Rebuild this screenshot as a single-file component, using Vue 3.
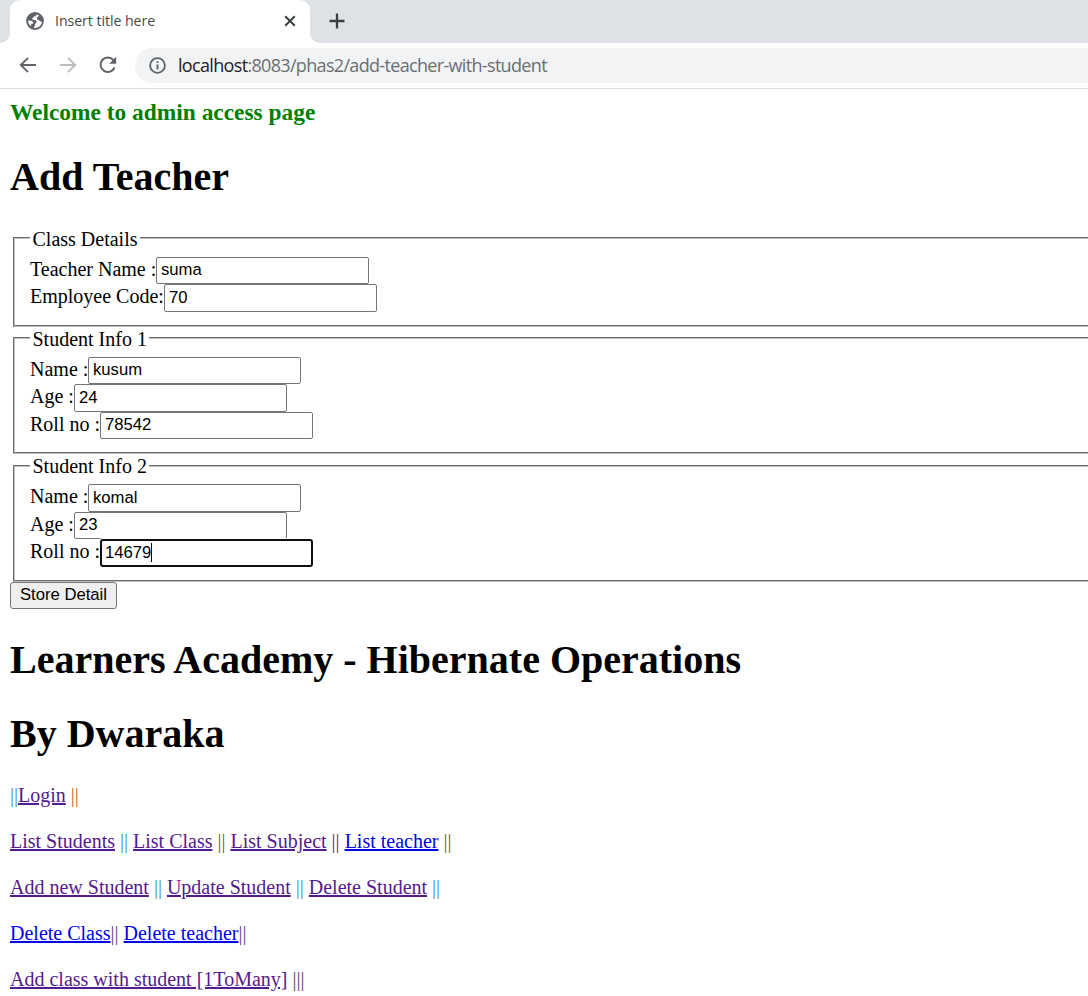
<script setup>
const groups = [
  { legend: 'Class Details', fields: [
    { label: 'Teacher Name :', value: 'suma', w: 126 },
    { label: 'Employee Code:', value: '70', w: 134 },
  ] },
  { legend: 'Student Info 1', fields: [
    { label: 'Name :', value: 'kusum', w: 58 },
    { label: 'Age :', value: '24', w: 44 },
    { label: 'Roll no :', value: '78542', w: 70 },
  ] },
  { legend: 'Student Info 2', fields: [
    { label: 'Name :', value: 'komal', w: 58 },
    { label: 'Age :', value: '23', w: 44 },
    { label: 'Roll no :', value: '14679', w: 70, focus: true },
  ] },
]
</script>

<template>
  <div class="window">
    <div class="tabs">
      <div class="prev"></div>
      <div class="tab">
        <svg class="globe" width="18" height="18" viewBox="0 0 18 18">
          <circle cx="9" cy="9" r="8.9" fill="#5f6368" />
          <path d="M10.4 2.2 C10.6 3.6 9.8 4.2 8.2 4.3 C7.6 5.6 7 5.4 6.2 6.4 C6 7.4 6.6 7.8 9.2 8 C10.6 8.4 10.8 9.4 10.6 10.6 C9.4 11.4 9 12 8.8 13.4 C8.6 14.6 8.2 15 7.6 15.7 L9 16 C12.6 16 15.6 13.4 16 9.8 C14.6 9.8 13.6 9 12.8 8 C11.4 8 10.6 7 11 5.8 C11.6 4.8 12.4 4.8 13 3.6 Z M2.1 8.6 L5 8.8 C6.6 9.2 7.4 10 7.4 11.6 L5.2 11.8 L5 14.2 C3.1 12.8 2.1 10.9 2.1 8.6 Z" fill="#fff" />
        </svg>
        <span class="tab-title">Insert title here</span>
        <svg class="close" width="12" height="12" viewBox="0 0 12 12"><path d="M1.2 1.2 L10.8 10.8 M10.8 1.2 L1.2 10.8" stroke="#3c4043" stroke-width="2" /></svg>
      </div>
      <div class="next"></div>
      <svg class="plus" width="16" height="16" viewBox="0 0 16 16"><path d="M8 .5 V15.5 M.5 8 H15.5" stroke="#3c4043" stroke-width="2.3" /></svg>
    </div>
    <div class="toolbar">
      <svg class="nav" width="18" height="18" viewBox="0 0 18 18"><path d="M17 9 H2 M9 1.8 L1.8 9 L9 16.2" fill="none" stroke="#5f6368" stroke-width="1.9" /></svg>
      <svg class="nav fwd" width="18" height="18" viewBox="0 0 18 18"><path d="M1 9 H16 M9 1.8 L16.2 9 L9 16.2" fill="none" stroke="#bbbdbf" stroke-width="1.9" /></svg>
      <svg class="nav reload" width="18" height="18" viewBox="0 0 18 18"><path d="M15.6 11.5 A7.3 7.3 0 1 1 14.4 4" fill="none" stroke="#5f6368" stroke-width="2" /><path d="M17.2 .8 V7.8 H10.2 Z" fill="#5f6368" /></svg>
      <div class="address">
        <svg width="17" height="17" viewBox="0 0 17 17"><circle cx="8.5" cy="8.5" r="7.4" fill="none" stroke="#5f6368" stroke-width="1.8" /><path d="M8.5 7.6 V12.6 M8.5 4.3 V6.1" stroke="#5f6368" stroke-width="1.9" /></svg>
        <span class="url"><span class="host">localhost</span>:8083/phas2/add-teacher-with-student</span>
      </div>
    </div>
    <main>
      <h3>Welcome to admin access page</h3>
      <h1>Add Teacher</h1>
      <form>
        <fieldset v-for="g in groups" :key="g.legend">
          <legend>{{ g.legend }}</legend>
          <div v-for="f in g.fields" :key="f.label" class="row">
            <label :style="{ width: f.w + 'px' }">{{ f.label }}</label>
            <span class="field" :class="{ focus: f.focus }"><input type="text" :value="f.value"><i v-if="f.focus" class="caret"></i></span>
          </div>
        </fieldset>
        <button type="button">Store Detail</button>
      </form>
      <h1 class="academy">Learners Academy - Hibernate Operations</h1>
      <h1 class="author">By Dwaraka</h1>
      <nav>
        <p><b class="blue">||</b><a>Login</a> <b class="brown">||</b></p>
        <p><a>List Students</a> <b class="blue">||</b> <a>List Class</a> <b class="olive">||</b> <a>List Subject</a> <b class="dark">||</b> <a class="new">List teacher</a> <b class="olive">||</b></p>
        <p><a>Add new Student</a> <b class="blue">||</b> <a>Update Student</a> <b class="blue">||</b> <a>Delete Student</a> <b class="blue">||</b></p>
        <p><a class="new">Delete Class</a><b class="purple">||</b> <a class="new">Delete teacher</a><b class="purple">||</b></p>
        <p><a>Add class with student [1ToMany]</a> <b class="purple">|||</b></p>
      </nav>
    </main>
  </div>
</template>

<style>
body { margin: 0; background: #fff; }
</style>

<style scoped>
.window { width: 1088px; height: 996px; overflow: hidden; background: #fff; color: #000; font: 20px/23px "Liberation Serif", "Times New Roman", serif; }
.tabs { display: flex; height: 43px; background: #dee1e6; }
.prev { width: 10px; background: #fff; }
.prev::before { content: ""; display: block; height: 43px; background: #dee1e6; border-bottom-right-radius: 10px; }
.tab { box-sizing: border-box; width: 300px; display: flex; align-items: center; background: #fff; border-radius: 10px 10px 0 0; padding: 0 14px 1px 16px; }
.globe { margin-right: 11px; }
.tab-title { flex: 1; font: 14.2px/20px "Open Sans", sans-serif; color: #45494d; letter-spacing: -0.07px; white-space: nowrap; }
.next { width: 10px; background: #fff; }
.next::before { content: ""; display: block; height: 43px; background: #dee1e6; border-bottom-left-radius: 10px; }
.plus { margin: 13px 0 0 9px; }
.toolbar { box-sizing: border-box; display: flex; align-items: center; height: 46px; padding: 0 0 1px 19px; border-bottom: 1px solid #d9dadc; }
.nav { flex: none; margin-right: 22px; }
.reload { margin-right: 18px; }
.address { box-sizing: border-box; flex: 1; display: flex; align-items: center; height: 35px; padding-left: 14px; border-radius: 18px 0 0 18px; background: #f1f3f4; }
.url { margin-left: 12px; font: 18px/24px "Open Sans", sans-serif; letter-spacing: -0.67px; color: #6b6f73; white-space: nowrap; }
.host { color: #202124; }
main { padding: 10px 0 0 10px; }
h3 { margin: 0; font-size: 23.4px; line-height: 27px; color: #008000; white-space: nowrap; }
h1 { margin: 28px 0 0; font-size: 40px; line-height: 46px; white-space: nowrap; }
form { margin-top: 26.8px; }
fieldset { margin: 0 -20px 0 2.5px; padding: 7px 15px 13px; border: 2px groove #c0c0c0; min-width: 0; }
legend { padding: 1px 2.5px 0 3px; line-height: 22px; }
.row { display: flex; height: 27.5px; }
label { flex: none; line-height: 25.5px; white-space: nowrap; text-indent: 0.5px; }
.field { position: relative; }
input { display: block; box-sizing: border-box; width: 213px; height: 27.5px; margin: 0; padding: 0 4px 1px 4.5px; border: 1px solid #767676; border-radius: 2px; background: #fff; color: #000; font: 16.67px "Liberation Sans", Arial, sans-serif; outline: none; }
.focus input { border: 2px solid #101010; border-radius: 3px; padding: 0 3px 1px 3.5px; box-shadow: 0 0 0 1px #fff; }
.caret { position: absolute; left: 51px; top: 4px; width: 1px; height: 19px; background: #000; }
button { display: block; box-sizing: border-box; width: 107px; height: 27px; margin: 0; padding: 0 0 1px; border: 1px solid #767676; border-radius: 3px; background: #efefef; color: #000; font: 16.67px "Liberation Sans", Arial, sans-serif; }
.academy { margin-top: 28px; }
.author { margin-top: 28px; }
nav { margin-top: 27.2px; }
p { margin: 0 0 23px; line-height: 23px; white-space: nowrap; }
a { color: #551a8b; text-decoration: underline; }
.new { color: #0000ee; }
b { font-weight: normal; }
.blue { color: #3d8fd0; }
.brown { color: #b5652b; }
.olive { color: #5c6b20; }
.dark { color: #4b3b50; }
.purple { color: #693f80; }
</style>
